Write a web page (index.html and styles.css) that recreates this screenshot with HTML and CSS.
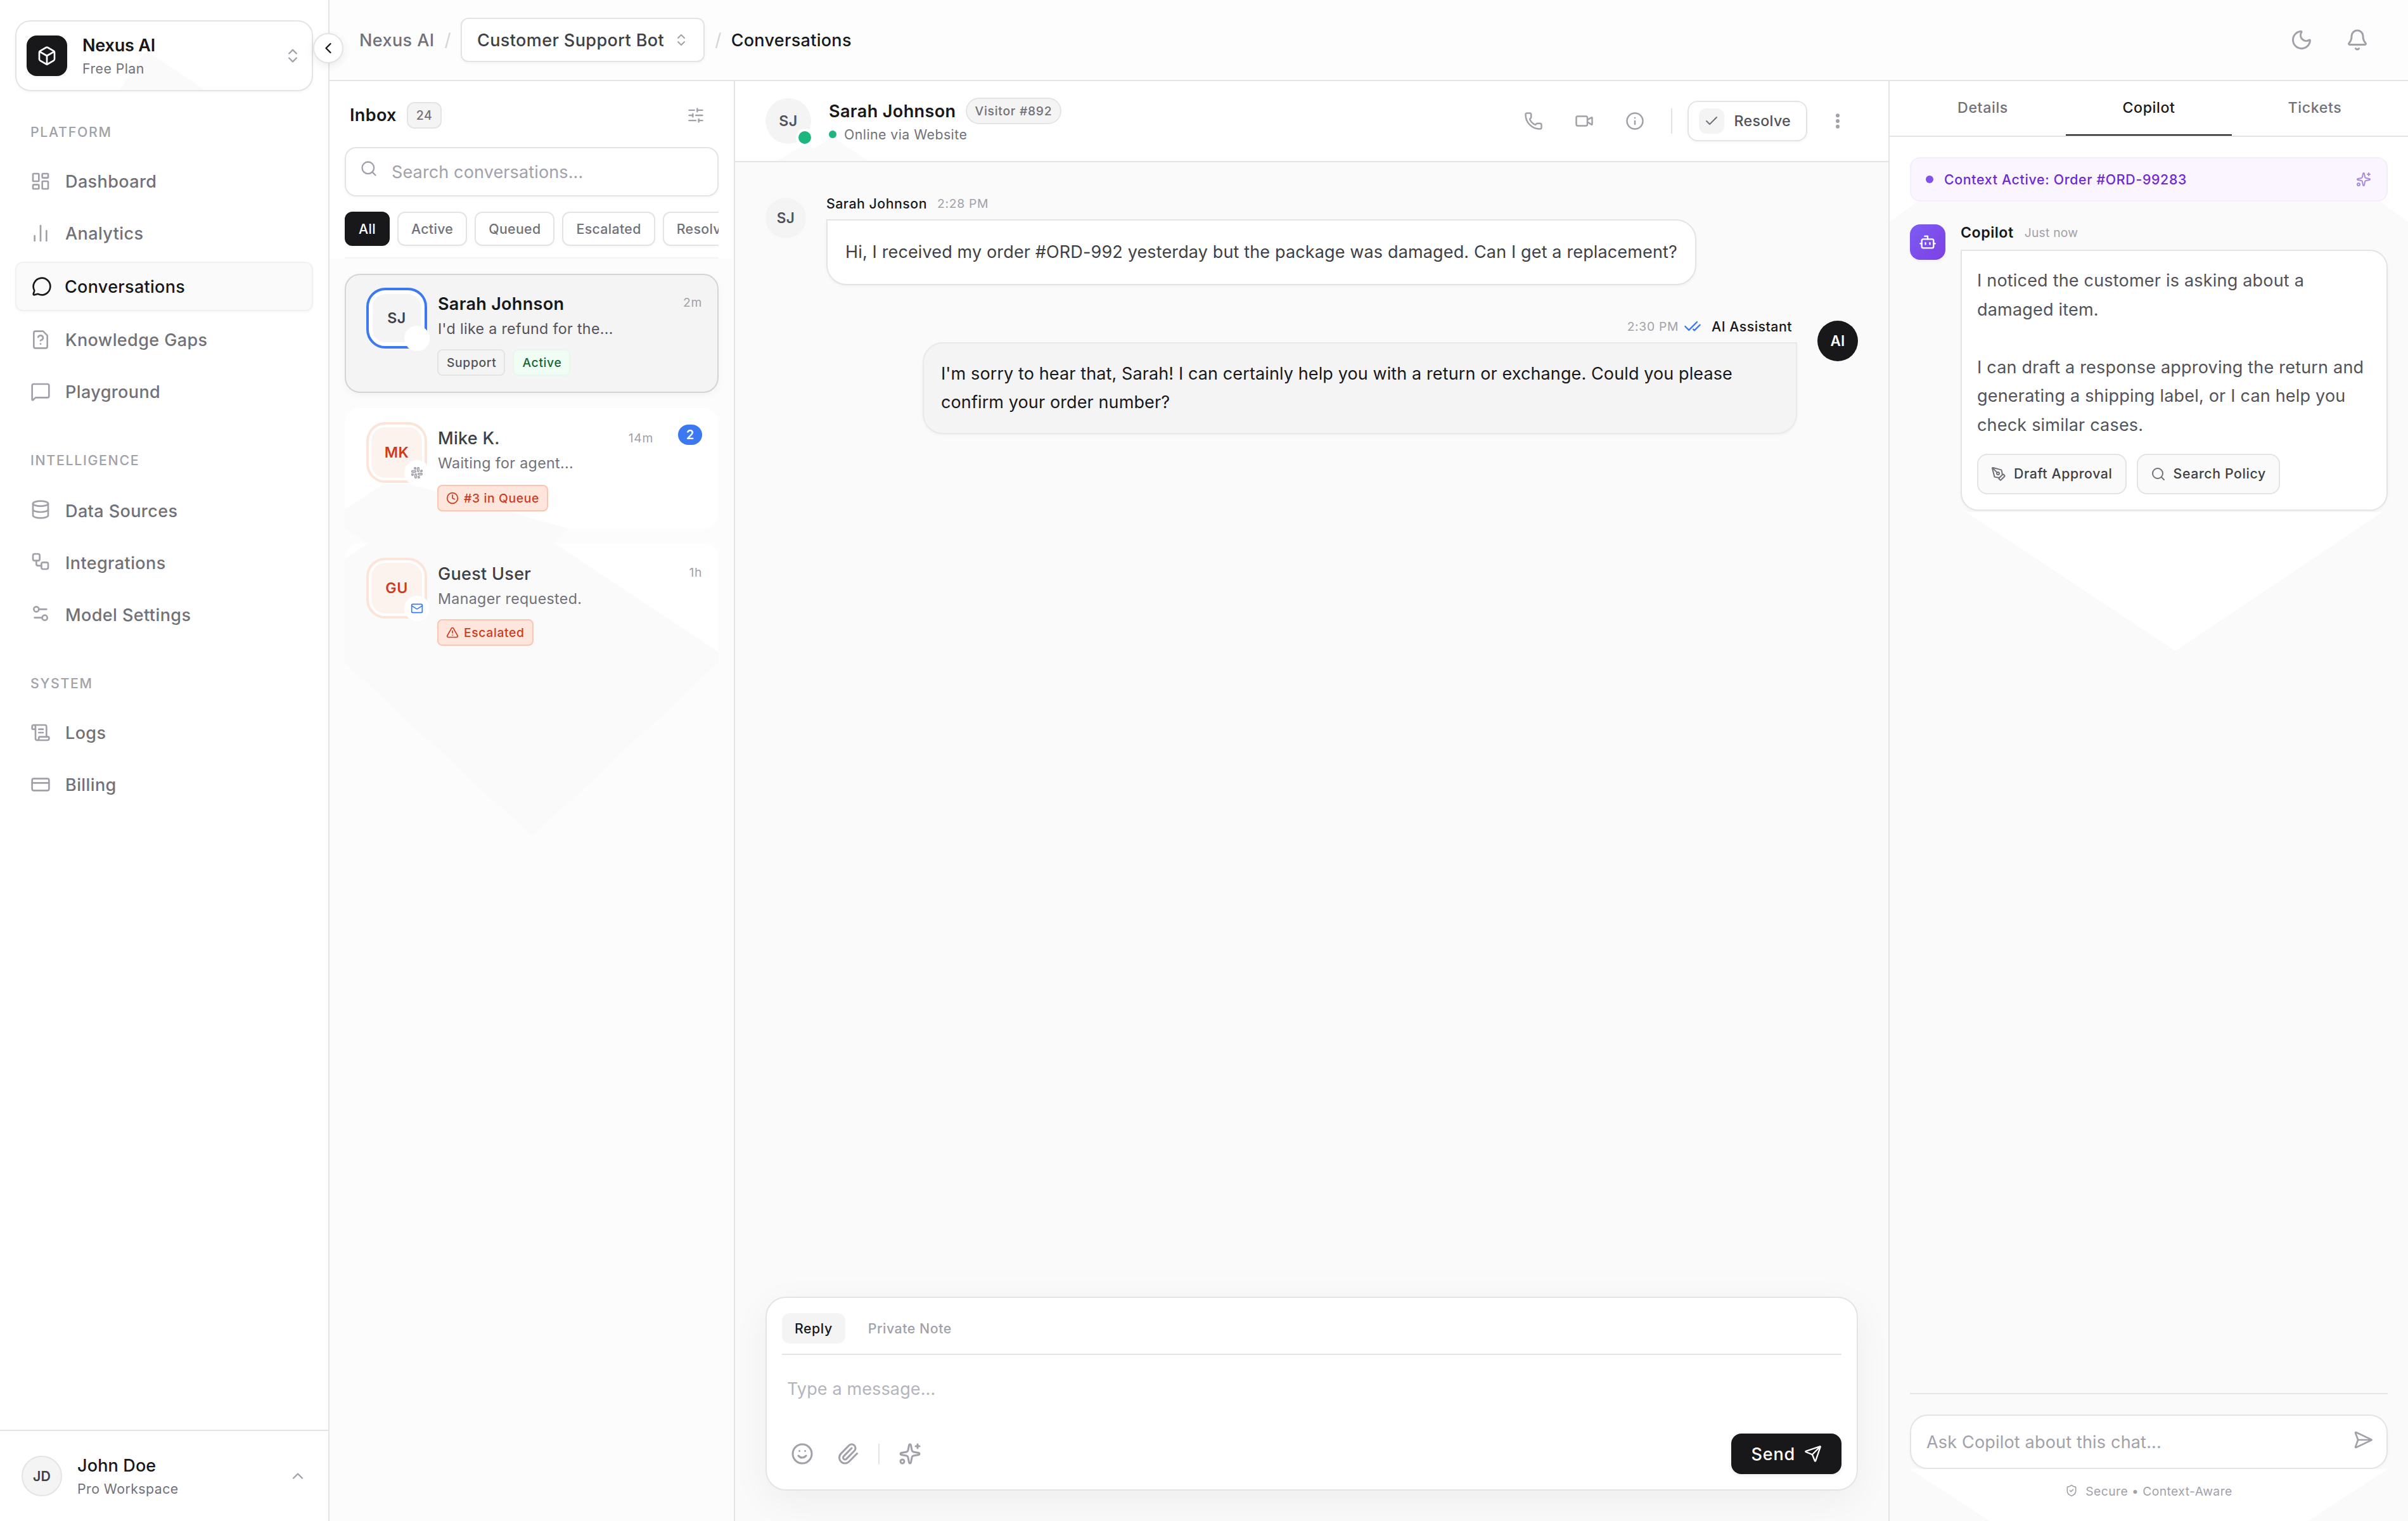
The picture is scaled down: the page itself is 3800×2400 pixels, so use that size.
FILE: index.html
```html
<!DOCTYPE html>
<html lang="en">
<head>
    <meta charset="UTF-8">
    <meta name="viewport" content="width=device-width, initial-scale=1.0">
    <title>Nexus AI - Conversations</title>
    <link rel="stylesheet" href="styles.css">
</head>
<body>
    <!-- Icon sprite -->
    <svg class="sprite">
        <symbol id="i-box" viewBox="0 0 24 24"><path d="M21 8a2 2 0 0 0-1-1.73l-7-4a2 2 0 0 0-2 0l-7 4A2 2 0 0 0 3 8v8a2 2 0 0 0 1 1.73l7 4a2 2 0 0 0 2 0l7-4A2 2 0 0 0 21 16Z"/><path d="m3.3 7 8.7 5 8.7-5"/><path d="M12 22V12"/></symbol>
        <symbol id="i-updown" viewBox="0 0 24 24"><path d="m7 15 5 5 5-5"/><path d="m7 9 5-5 5 5"/></symbol>
        <symbol id="i-left" viewBox="0 0 24 24"><path d="m15 18-6-6 6-6"/></symbol>
        <symbol id="i-up" viewBox="0 0 24 24"><path d="m18 15-6-6-6 6"/></symbol>
        <symbol id="i-dashboard" viewBox="0 0 24 24"><rect width="7" height="9" x="3" y="3" rx="1"/><rect width="7" height="5" x="14" y="3" rx="1"/><rect width="7" height="9" x="14" y="12" rx="1"/><rect width="7" height="5" x="3" y="16" rx="1"/></symbol>
        <symbol id="i-chart" viewBox="0 0 24 24"><path d="M5 21v-6"/><path d="M12 21V3"/><path d="M19 21V9"/></symbol>
        <symbol id="i-circle-msg" viewBox="0 0 24 24"><path d="M2.992 16.342a2 2 0 0 1 .094 1.167l-1.065 3.29a1 1 0 0 0 1.236 1.168l3.413-.998a2 2 0 0 1 1.099.092 10 10 0 1 0-4.777-4.719"/></symbol>
        <symbol id="i-file-q" viewBox="0 0 24 24"><path d="M12 17h.01"/><path d="M15 2H6a2 2 0 0 0-2 2v16a2 2 0 0 0 2 2h12a2 2 0 0 0 2-2V7z"/><path d="M9.1 9a3 3 0 0 1 5.82 1c0 2-3 3-3 3"/></symbol>
        <symbol id="i-square-msg" viewBox="0 0 24 24"><path d="M22 17a2 2 0 0 1-2 2H6.828a2 2 0 0 0-1.414.586l-2.202 2.202A.71.71 0 0 1 2 21.286V5a2 2 0 0 1 2-2h16a2 2 0 0 1 2 2z"/></symbol>
        <symbol id="i-database" viewBox="0 0 24 24"><ellipse cx="12" cy="5" rx="9" ry="3"/><path d="M3 5v14a9 3 0 0 0 18 0V5"/><path d="M3 12a9 3 0 0 0 18 0"/></symbol>
        <symbol id="i-workflow" viewBox="0 0 24 24"><rect width="8" height="8" x="3" y="3" rx="2"/><path d="M7 11v4a2 2 0 0 0 2 2h4"/><rect width="8" height="8" x="13" y="13" rx="2"/></symbol>
        <symbol id="i-settings" viewBox="0 0 24 24"><path d="M14 17H5"/><path d="M19 7h-9"/><circle cx="17" cy="17" r="3"/><circle cx="7" cy="7" r="3"/></symbol>
        <symbol id="i-scroll" viewBox="0 0 24 24"><path d="M15 12h-5"/><path d="M15 8h-5"/><path d="M19 17V5a2 2 0 0 0-2-2H4"/><path d="M8 21h12a2 2 0 0 0 2-2v-1a1 1 0 0 0-1-1H11a1 1 0 0 0-1 1v1a2 2 0 1 1-4 0V5a2 2 0 1 0-4 0v2a1 1 0 0 0 1 1h3"/></symbol>
        <symbol id="i-card" viewBox="0 0 24 24"><rect width="20" height="14" x="2" y="5" rx="2"/><path d="M2 10h20"/></symbol>
        <symbol id="i-moon" viewBox="0 0 24 24"><path d="M20.985 12.486a9 9 0 1 1-9.473-9.472c.405-.022.617.46.402.803a6 6 0 0 0 8.268 8.268c.344-.215.825-.004.803.401"/></symbol>
        <symbol id="i-bell" viewBox="0 0 24 24"><path d="M10.268 21a2 2 0 0 0 3.464 0"/><path d="M3.262 15.326A1 1 0 0 0 4 17h16a1 1 0 0 0 .74-1.673C19.41 13.956 18 12.499 18 8A6 6 0 0 0 6 8c0 4.499-1.411 5.956-2.738 7.326"/></symbol>
        <symbol id="i-sliders" viewBox="0 0 24 24"><path d="M10 5H3"/><path d="M12 19H3"/><path d="M14 3v4"/><path d="M16 17v4"/><path d="M21 12h-9"/><path d="M21 19h-5"/><path d="M21 5h-7"/><path d="M8 10v4"/><path d="M8 12H3"/></symbol>
        <symbol id="i-search" viewBox="0 0 24 24"><circle cx="11" cy="11" r="8"/><path d="m21 21-4.34-4.34"/></symbol>
        <symbol id="i-slack" viewBox="0 0 24 24"><rect width="3" height="8" x="13" y="2" rx="1.5"/><path d="M19 8.5V10h1.5A1.5 1.5 0 1 0 19 8.5"/><rect width="3" height="8" x="8" y="14" rx="1.5"/><path d="M5 15.5V14H3.5A1.5 1.5 0 1 0 5 15.5"/><rect width="8" height="3" x="14" y="13" rx="1.5"/><path d="M15.5 19H14v1.5a1.5 1.5 0 1 0 1.5-1.5"/><rect width="8" height="3" x="2" y="8" rx="1.5"/><path d="M8.5 5H10V3.5A1.5 1.5 0 1 0 8.5 5"/></symbol>
        <symbol id="i-mail" viewBox="0 0 24 24"><path d="m22 7-8.991 5.727a2 2 0 0 1-2.009 0L2 7"/><rect width="20" height="16" x="2" y="4" rx="2"/></symbol>
        <symbol id="i-clock" viewBox="0 0 24 24"><circle cx="12" cy="12" r="10"/><path d="M12 6v6l4 2"/></symbol>
        <symbol id="i-alert" viewBox="0 0 24 24"><path d="m21.73 18-8-14a2 2 0 0 0-3.48 0l-8 14A2 2 0 0 0 4 21h16a2 2 0 0 0 1.73-3"/><path d="M12 9v4"/><path d="M12 17h.01"/></symbol>
        <symbol id="i-phone" viewBox="0 0 24 24"><path d="M13.832 16.568a1 1 0 0 0 1.213-.303l.355-.465A2 2 0 0 1 17 15h3a2 2 0 0 1 2 2v3a2 2 0 0 1-2 2A18 18 0 0 1 2 4a2 2 0 0 1 2-2h3a2 2 0 0 1 2 2v3a2 2 0 0 1-.8 1.6l-.468.351a1 1 0 0 0-.292 1.233 14 14 0 0 0 6.392 6.384"/></symbol>
        <symbol id="i-video" viewBox="0 0 24 24"><path d="m16 13 5.223 3.482a.5.5 0 0 0 .777-.416V7.87a.5.5 0 0 0-.752-.432L16 10.5"/><rect x="2" y="6" width="14" height="12" rx="2"/></symbol>
        <symbol id="i-info" viewBox="0 0 24 24"><circle cx="12" cy="12" r="10"/><path d="M12 16v-4"/><path d="M12 8h.01"/></symbol>
        <symbol id="i-check" viewBox="0 0 24 24"><path d="M20 6 9 17l-5-5"/></symbol>
        <symbol id="i-more" viewBox="0 0 24 24"><circle cx="12" cy="5" r="1.4"/><circle cx="12" cy="12" r="1.4"/><circle cx="12" cy="19" r="1.4"/></symbol>
        <symbol id="i-checks" viewBox="0 0 24 24"><path d="M18 6 7 17l-5-5"/><path d="m22 10-7.5 7.5L13 16"/></symbol>
        <symbol id="i-smile" viewBox="0 0 24 24"><circle cx="12" cy="12" r="10"/><path d="M8 14s1.5 2 4 2 4-2 4-2"/><path d="M9 9h.01"/><path d="M15 9h.01"/></symbol>
        <symbol id="i-clip" viewBox="0 0 24 24"><path d="m16 6-8.414 8.586a2 2 0 0 0 2.829 2.829l8.414-8.586a4 4 0 1 0-5.657-5.657l-8.379 8.551a6 6 0 1 0 8.485 8.485l8.379-8.551"/></symbol>
        <symbol id="i-sparkles" viewBox="0 0 24 24"><path d="M11.017 2.814a1 1 0 0 1 1.966 0l1.051 5.558a2 2 0 0 0 1.594 1.594l5.558 1.051a1 1 0 0 1 0 1.966l-5.558 1.051a2 2 0 0 0-1.594 1.594l-1.051 5.558a1 1 0 0 1-1.966 0l-1.051-5.558a2 2 0 0 0-1.594-1.594l-5.558-1.051a1 1 0 0 1 0-1.966l5.558-1.051a2 2 0 0 0 1.594-1.594z"/><path d="M20 2v4"/><path d="M22 4h-4"/><circle cx="4" cy="20" r="2"/></symbol>
        <symbol id="i-send" viewBox="0 0 24 24"><path d="M14.536 21.686a.5.5 0 0 0 .937-.024l6.5-19a.496.496 0 0 0-.635-.635l-19 6.5a.5.5 0 0 0-.024.937l7.93 3.18a2 2 0 0 1 1.112 1.11z"/><path d="m21.854 2.147-10.94 10.939"/></symbol>
        <symbol id="i-send-h" viewBox="0 0 24 24"><path d="M3.714 3.048a.498.498 0 0 0-.683.627l2.843 7.627a2 2 0 0 1 0 1.396l-2.842 7.627a.498.498 0 0 0 .682.627l18-8.5a.5.5 0 0 0 0-.904z"/><path d="M6 12h16"/></symbol>
        <symbol id="i-bot" viewBox="0 0 24 24"><path d="M12 8V4H8"/><rect width="16" height="12" x="4" y="8" rx="2"/><path d="M2 14h2"/><path d="M20 14h2"/><path d="M15 13v2"/><path d="M9 13v2"/></symbol>
        <symbol id="i-pen" viewBox="0 0 24 24"><path d="M15.707 21.293a1 1 0 0 1-1.414 0l-1.586-1.586a1 1 0 0 1 0-1.414l5.586-5.586a1 1 0 0 1 1.414 0l1.586 1.586a1 1 0 0 1 0 1.414z"/><path d="m18 13-1.375-6.874a1 1 0 0 0-.746-.776L3.235 2.028a1 1 0 0 0-1.207 1.207L5.35 15.879a1 1 0 0 0 .776.746L13 18"/><path d="m2.3 2.3 7.286 7.286"/><circle cx="11" cy="11" r="2"/></symbol>
        <symbol id="i-shield" viewBox="0 0 24 24"><path d="M20 13c0 5-3.5 7.5-7.66 8.95a1 1 0 0 1-.67-.01C7.5 20.5 4 18 4 13V6a1 1 0 0 1 1-1c2 0 4.5-1.2 6.24-2.72a1.17 1.17 0 0 1 1.52 0C14.51 3.81 17 5 19 5a1 1 0 0 1 1 1z"/><path d="m9 12 2 2 4-4"/></symbol>
    </svg>

    <div class="app">
        <aside class="sidebar">
            <div class="workspace">
                <div class="workspace-logo"><svg class="icon icon-32"><use href="#i-box"/></svg></div>
                <div class="workspace-text">
                    <div class="workspace-name">Nexus AI</div>
                    <div class="workspace-plan">Free Plan</div>
                </div>
                <svg class="icon icon-28 muted"><use href="#i-updown"/></svg>
            </div>
            <button class="collapse"><svg class="icon icon-28"><use href="#i-left"/></svg></button>

            <nav class="nav">
                <div class="nav-group">
                    <div class="nav-label">PLATFORM</div>
                    <a class="nav-item"><svg class="icon icon-32"><use href="#i-dashboard"/></svg>Dashboard</a>
                    <a class="nav-item"><svg class="icon icon-32"><use href="#i-chart"/></svg>Analytics</a>
                    <a class="nav-item active"><svg class="icon icon-32"><use href="#i-circle-msg"/></svg>Conversations</a>
                    <a class="nav-item"><svg class="icon icon-32"><use href="#i-file-q"/></svg>Knowledge Gaps</a>
                    <a class="nav-item"><svg class="icon icon-32"><use href="#i-square-msg"/></svg>Playground</a>
                </div>
                <div class="nav-group intelligence">
                    <div class="nav-label">INTELLIGENCE</div>
                    <a class="nav-item"><svg class="icon icon-32"><use href="#i-database"/></svg>Data Sources</a>
                    <a class="nav-item"><svg class="icon icon-32"><use href="#i-workflow"/></svg>Integrations</a>
                    <a class="nav-item"><svg class="icon icon-32"><use href="#i-settings"/></svg>Model Settings</a>
                </div>
                <div class="nav-group">
                    <div class="nav-label">SYSTEM</div>
                    <a class="nav-item"><svg class="icon icon-32"><use href="#i-scroll"/></svg>Logs</a>
                    <a class="nav-item"><svg class="icon icon-32"><use href="#i-card"/></svg>Billing</a>
                </div>
            </nav>

            <div class="user">
                <div class="user-avatar">JD</div>
                <div class="user-text">
                    <div class="user-name">John Doe</div>
                    <div class="user-plan">Pro Workspace</div>
                </div>
                <svg class="icon icon-28 muted"><use href="#i-up"/></svg>
            </div>
        </aside>

        <div class="main">
            <header class="topbar">
                <span class="crumb">Nexus AI</span>
                <span class="slash">/</span>
                <button class="crumb-select">Customer Support Bot<svg class="icon icon-24 muted"><use href="#i-updown"/></svg></button>
                <span class="slash">/</span>
                <span class="crumb current">Conversations</span>
                <div class="topbar-actions">
                    <svg class="icon icon-36"><use href="#i-moon"/></svg>
                    <svg class="icon icon-36"><use href="#i-bell"/></svg>
                </div>
            </header>

            <div class="columns">
                <section class="inbox">
                    <div class="inbox-head">
                        <div class="inbox-title">
                            <h2>Inbox</h2>
                            <span class="count">24</span>
                            <svg class="icon icon-28 muted"><use href="#i-sliders"/></svg>
                        </div>
                        <div class="search">
                            <svg class="icon icon-28 muted"><use href="#i-search"/></svg>
                            <input type="text" placeholder="Search conversations...">
                        </div>
                        <div class="chips">
                            <button class="chip selected">All</button>
                            <button class="chip">Active</button>
                            <button class="chip">Queued</button>
                            <button class="chip">Escalated</button>
                            <button class="chip">Resolved</button>
                        </div>
                    </div>
                    <div class="list">
                        <div class="convo selected">
                            <div class="convo-avatar"><span>SJ</span><i class="channel"></i></div>
                            <div class="convo-body">
                                <div class="convo-top"><span class="convo-name">Sarah Johnson</span><span class="convo-time">2m</span></div>
                                <div class="convo-preview">I'd like a refund for the...</div>
                                <div class="tags"><span class="tag">Support</span><span class="tag green">Active</span></div>
                            </div>
                        </div>
                        <div class="convo waiting">
                            <div class="convo-avatar alert"><span>MK</span><i class="channel"><svg class="icon icon-20"><use href="#i-slack"/></svg></i></div>
                            <div class="convo-body">
                                <div class="convo-top"><span class="convo-name">Mike K.</span><span class="convo-time">14m</span><span class="unread">2</span></div>
                                <div class="convo-preview">Waiting for agent...</div>
                                <div class="tags"><span class="tag red"><svg class="icon icon-20"><use href="#i-clock"/></svg>#3 in Queue</span></div>
                            </div>
                        </div>
                        <div class="convo">
                            <div class="convo-avatar alert"><span>GU</span><i class="channel mail"><svg class="icon icon-20"><use href="#i-mail"/></svg></i></div>
                            <div class="convo-body">
                                <div class="convo-top"><span class="convo-name">Guest User</span><span class="convo-time">1h</span></div>
                                <div class="convo-preview">Manager requested.</div>
                                <div class="tags"><span class="tag red"><svg class="icon icon-20"><use href="#i-alert"/></svg>Escalated</span></div>
                            </div>
                        </div>
                    </div>
                </section>

                <section class="chat">
                    <div class="chat-head">
                        <div class="chat-avatar">SJ<i class="presence"></i></div>
                        <div class="chat-who">
                            <div class="chat-name">Sarah Johnson<span class="visitor">Visitor #892</span></div>
                            <div class="chat-status"><i class="dot"></i>Online via Website</div>
                        </div>
                        <div class="chat-actions">
                            <svg class="icon icon-30"><use href="#i-phone"/></svg>
                            <svg class="icon icon-30"><use href="#i-video"/></svg>
                            <svg class="icon icon-30"><use href="#i-info"/></svg>
                            <i class="divider"></i>
                            <button class="resolve"><span class="resolve-check"><svg class="icon icon-24"><use href="#i-check"/></svg></span>Resolve</button>
                            <svg class="icon icon-30 more"><use href="#i-more"/></svg>
                        </div>
                    </div>

                    <div class="messages">
                        <div class="message">
                            <div class="msg-avatar">SJ</div>
                            <div class="msg-body">
                                <div class="msg-meta"><b>Sarah Johnson</b><span class="time">2:28 PM</span></div>
                                <div class="bubble">Hi, I received my order #ORD-992 yesterday but the package was damaged. Can I get a replacement?</div>
                            </div>
                        </div>
                        <div class="message outgoing">
                            <div class="msg-body">
                                <div class="msg-meta"><span class="time">2:30 PM<svg class="icon icon-28"><use href="#i-checks"/></svg></span><b>AI Assistant</b></div>
                                <div class="bubble">I'm sorry to hear that, Sarah! I can certainly help you with a return or exchange. Could you please<br>confirm your order number?</div>
                            </div>
                            <div class="msg-avatar ai">AI</div>
                        </div>
                    </div>

                    <div class="composer">
                        <div class="composer-tabs">
                            <button class="composer-tab selected">Reply</button>
                            <button class="composer-tab">Private Note</button>
                        </div>
                        <textarea placeholder="Type a message..."></textarea>
                        <div class="composer-tools">
                            <svg class="icon icon-36"><use href="#i-smile"/></svg>
                            <svg class="icon icon-36"><use href="#i-clip"/></svg>
                            <i class="divider"></i>
                            <svg class="icon icon-36"><use href="#i-sparkles"/></svg>
                            <button class="send">Send<svg class="icon icon-28"><use href="#i-send"/></svg></button>
                        </div>
                    </div>
                </section>

                <aside class="copilot">
                    <div class="tabs">
                        <button class="tab">Details</button>
                        <button class="tab selected">Copilot</button>
                        <button class="tab">Tickets</button>
                    </div>
                    <div class="copilot-body">
                        <div class="context"><i class="dot"></i>Context Active: Order #ORD-99283<svg class="icon icon-24"><use href="#i-sparkles"/></svg></div>
                        <div class="copilot-msg">
                            <div class="bot"><svg class="icon icon-28"><use href="#i-bot"/></svg></div>
                            <div class="copilot-content">
                                <div class="copilot-meta"><b>Copilot</b><span>Just now</span></div>
                                <div class="copilot-bubble">
                                    <p>I noticed the customer is asking about a<br>damaged item.</p>
                                    <p>I can draft a response approving the return and<br>generating a shipping label, or I can help you<br>check similar cases.</p>
                                    <div class="suggestions">
                                        <button class="suggestion"><svg class="icon icon-24"><use href="#i-pen"/></svg>Draft Approval</button>
                                        <button class="suggestion"><svg class="icon icon-24"><use href="#i-search"/></svg>Search Policy</button>
                                    </div>
                                </div>
                            </div>
                        </div>
                    </div>
                    <div class="ask">
                        <div class="ask-box">
                            <input type="text" placeholder="Ask Copilot about this chat...">
                            <svg class="icon icon-32 muted"><use href="#i-send-h"/></svg>
                        </div>
                        <div class="secure"><svg class="icon icon-20"><use href="#i-shield"/></svg>Secure • Context-Aware</div>
                    </div>
                </aside>
            </div>
        </div>
    </div>
</body>
</html>
```
FILE: styles.css
```css
* {
    margin: 0;
    padding: 0;
    box-sizing: border-box;
}

body {
    font-family: Inter, 'Liberation Sans', sans-serif;
    font-size: 27px;
    letter-spacing: 0.13px;
    color: #18181b;
    background: #fff;
}

button, input, textarea {
    font: inherit;
    letter-spacing: inherit;
    color: inherit;
    background: none;
    border: none;
    outline: none;
    resize: none;
}

input::placeholder {
    color: #a1a1aa;
    opacity: 1;
}

.sprite {
    display: none;
}

/* Icons */
.icon {
    flex-shrink: 0;
    fill: none;
    stroke: currentColor;
    stroke-width: 2;
    stroke-linecap: round;
    stroke-linejoin: round;
}

.icon-20 { width: 20px; height: 20px; }
.icon-24 { width: 24px; height: 24px; }
.icon-28 { width: 28px; height: 28px; }
.icon-30 { width: 30px; height: 30px; }
.icon-32 { width: 32px; height: 32px; }
.icon-36 { width: 36px; height: 36px; }

.muted {
    color: #a1a1aa;
}

.app {
    display: flex;
    height: 100vh;
    overflow: hidden;
}

/* Sidebar */
.sidebar {
    position: relative;
    z-index: 2;
    width: 520px;
    flex-shrink: 0;
    display: flex;
    flex-direction: column;
    padding-top: 32px;
    background: #fff;
    border-right: 2px solid #e4e4e7;
}

.workspace {
    position: relative;
    display: flex;
    align-items: center;
    height: 112px;
    margin: 0 24px;
    padding: 0 16px;
    border: 2px solid #e4e4e7;
    border-radius: 24px;
    box-shadow: 0 2px 4px rgba(0, 0, 0, 0.04);
}

.workspace::before {
    content: '';
    position: absolute;
    left: 163px;
    bottom: 0;
    width: 134px;
    height: 58px;
    background: #fafafa;
    clip-path: polygon(28% 0, 36% 0, 100% 100%, 0 100%);
}

.workspace-logo {
    display: flex;
    align-items: center;
    justify-content: center;
    width: 64px;
    height: 64px;
    margin-right: 24px;
    border-radius: 16px;
    background: #18181b;
    color: #fff;
    box-shadow: 0 2px 4px rgba(0, 0, 0, 0.05);
}

.workspace-text {
    position: relative;
    flex: 1;
}

.workspace-name {
    line-height: 40px;
    font-weight: 600;
    letter-spacing: -0.2px;
}

.workspace-plan, .user-plan {
    font-size: 21.3px;
    line-height: 32px;
    letter-spacing: 0.45px;
    color: #71717a;
}

.collapse {
    position: absolute;
    top: 52px;
    right: -24px;
    display: flex;
    align-items: center;
    justify-content: center;
    width: 48px;
    height: 48px;
    border: 2px solid #e4e4e7;
    border-radius: 50%;
    background: #fff;
    box-shadow: 0 4px 14px rgba(0, 0, 0, 0.08);
}

.nav {
    flex: 1;
    padding: 48px 24px 0;
}

.nav-group {
    display: flex;
    flex-direction: column;
    gap: 6px;
    margin-bottom: 54px;
}

.nav-label {
    padding-left: 24px;
    margin-bottom: 18px;
    font-size: 21.3px;
    line-height: 32px;
    font-weight: 500;
    letter-spacing: 1.7px;
    color: #a1a1aa;
}

.nav-item {
    display: flex;
    align-items: center;
    gap: 23px;
    height: 76px;
    padding-left: 24px;
    font-weight: 500;
    letter-spacing: 0.4px;
    color: #71717a;
}

.nav-item .icon {
    color: #a1a1aa;
}

.nav-item.active {
    gap: 20px;
    height: 78px;
    margin: 1px 0;
    border: 2px solid #f1f1f4;
    border-radius: 12px;
    background: #fafafa;
    box-shadow: 0 2px 4px rgba(0, 0, 0, 0.03);
    color: #18181b;
    letter-spacing: 0.3px;
}

.nav-item.active .icon {
    color: #18181b;
}

.intelligence .nav-label {
    margin-bottom: 20px;
}

.intelligence .icon {
    margin-bottom: 4px;
}

.user {
    display: flex;
    align-items: center;
    height: 144px;
    padding: 0 34px;
    border-top: 2px solid #e4e4e7;
}

.user-avatar {
    width: 64px;
    height: 64px;
    margin-right: 24px;
    border: 2px solid #e4e4e7;
    border-radius: 50%;
    background: #f4f4f5;
    font-size: 21.3px;
    line-height: 60px;
    font-weight: 600;
    text-align: center;
    color: #3f3f46;
}

.user-text {
    flex: 1;
}

.user-name {
    line-height: 40px;
    font-weight: 500;
    letter-spacing: 0.15px;
}

/* Top bar */
.main {
    flex: 1;
    min-width: 0;
    display: flex;
    flex-direction: column;
}

.topbar {
    display: flex;
    align-items: center;
    height: 128px;
    padding: 0 62px 0 47px;
    background: #fdfdfd;
    border-bottom: 2px solid #e4e4e7;
    font-weight: 500;
    letter-spacing: 0.4px;
    flex-shrink: 0;
}

.crumb {
    color: #71717a;
}

.crumb.current {
    color: #18181b;
    letter-spacing: 0.3px;
}

.slash {
    margin: 0 15px 0 16px;
    font-size: 28px;
    font-weight: 400;
    color: #d4d4d8;
}

.crumb-select {
    display: flex;
    align-items: center;
    gap: 15px;
    height: 70px;
    padding: 0 23px 0 24px;
    border: 2px solid #e4e4e7;
    border-radius: 12px;
    background: #fff;
    box-shadow: 0 2px 4px rgba(0, 0, 0, 0.04);
    font-weight: 500;
    color: #3f3f46;
}

.topbar-actions {
    display: flex;
    gap: 52px;
    margin-left: auto;
    color: #a1a1aa;
}

.columns {
    flex: 1;
    display: flex;
    min-height: 0;
}

/* Inbox */
.inbox {
    width: 640px;
    flex-shrink: 0;
    border-right: 2px solid #e4e4e7;
    background: #fcfcfc;
}

.inbox-head {
    height: 280px;
    padding: 0 24px;
    background: #fff;
}

.inbox-title {
    display: flex;
    align-items: center;
    height: 104px;
    padding: 3px 22px 0 8px;
}

.inbox-title h2 {
    font-size: 27px;
    font-weight: 600;
    letter-spacing: 0.35px;
}

.inbox-title .icon {
    margin-left: auto;
}

.count {
    height: 42px;
    margin-left: 16px;
    padding: 0 13px;
    border: 2px solid #e4e4e7;
    border-radius: 12px;
    background: #f4f4f5;
    font-size: 19.5px;
    line-height: 38px;
    font-weight: 500;
    letter-spacing: 0.4px;
    color: #71717a;
}

.search {
    display: flex;
    align-items: center;
    height: 78px;
    padding: 0 22px;
    border: 2px solid #e4e4e7;
    border-radius: 18px;
    box-shadow: 0 2px 4px rgba(0, 0, 0, 0.04);
}

.search .icon {
    margin: 0 22px 10px 0;
}

.search input {
    flex: 1;
}

.chips {
    display: flex;
    gap: 12px;
    height: 98px;
    padding-top: 24px;
    overflow: hidden;
    border-bottom: 2px solid #f4f4f5;
}

.chip {
    flex-shrink: 0;
    height: 54px;
    padding: 0 20px;
    border: 2px solid #e4e4e7;
    border-radius: 12px;
    background: #fff;
    box-shadow: 0 2px 4px rgba(0, 0, 0, 0.03);
    font-size: 21.3px;
    line-height: 48px;
    font-weight: 500;
    letter-spacing: 0.35px;
    color: #71717a;
}

.chip.selected {
    border-color: #18181b;
    background: #18181b;
    color: #fff;
}

.list {
    position: relative;
    display: flex;
    flex-direction: column;
    gap: 24px;
    padding: 24px;
}

/* faint tinted polygon behind the lower conversations */
.list::after {
    content: '';
    position: absolute;
    left: 24px;
    top: 356px;
    width: 590px;
    height: 556px;
    background: #fafafa;
    clip-path: polygon(0 40px, 61px 0, 102px 0, 353px 70px, 331px 93px, 590px 265px, 590px 282px, 296px 556px, 0 282px, 0 118px, 37px 93px, 0 70px);
}

.convo {
    display: flex;
    gap: 16px;
    height: 190px;
    padding: 20px 24px 0 32px;
    border: 2px solid transparent;
    border-radius: 24px;
    background: #fff;
}

.convo.selected {
    height: 188px;
    border-color: #d4d4d8;
    background: #f4f4f5;
    box-shadow: 0 4px 12px rgba(0, 0, 0, 0.04);
}

.convo-avatar {
    position: relative;
    z-index: 1;
    flex-shrink: 0;
    width: 96px;
    height: 96px;
    padding: 6px;
    border: 4px solid #3b78f2;
    border-radius: 30px;
    background: #fff;
    font-size: 23.2px;
    font-weight: 600;
    letter-spacing: 0.5px;
    text-align: center;
    color: #3f3f46;
}

.convo-avatar span {
    display: block;
    height: 76px;
    border-radius: 20px;
    background: #f4f4f5;
    line-height: 76px;
}

.convo-avatar.alert {
    padding: 4px;
    border-color: #fde4d9;
    color: #d13a1c;
}

.convo-avatar.alert span {
    height: 80px;
    border-radius: 22px;
    background: #fdf3ee;
    line-height: 80px;
}

.channel {
    position: absolute;
    right: -8px;
    bottom: -8px;
    display: flex;
    align-items: center;
    justify-content: center;
    width: 40px;
    height: 40px;
    border-radius: 50%;
    background: #fff;
    color: #a1a1aa;
}

.channel.mail {
    color: #3b78f2;
}

.convo-body {
    position: relative;
    z-index: 1;
    flex: 1;
    padding-top: 8px;
    padding-left: 1px;
}

.convo-top {
    display: flex;
    align-items: flex-start;
    height: 36px;
    line-height: 36px;
}

.convo-name {
    flex: 1;
    font-weight: 500;
    letter-spacing: 0.3px;
    color: #3f3f46;
}

.convo.selected .convo-name {
    font-weight: 600;
    color: #18181b;
}

.convo-time {
    font-size: 19.3px;
    line-height: 30px;
    letter-spacing: 0.65px;
    color: #a1a1aa;
}

.waiting .convo-time {
    line-height: 34px;
}

.unread {
    width: 38px;
    height: 32px;
    margin: -4px 0 0 39px;
    border-radius: 16px;
    background: #3b78f2;
    font-size: 20px;
    line-height: 32px;
    font-weight: 600;
    text-align: center;
    color: #fff;
}

.convo-preview {
    margin-top: 4px;
    font-size: 23.2px;
    line-height: 34px;
    letter-spacing: 0.35px;
    color: #71717a;
}

.convo.selected .convo-preview {
    color: #52525b;
}

.tags {
    display: flex;
    gap: 12px;
    margin: 15px 0 0 -1px;
}

.waiting .tags {
    margin-top: 17px;
}

.tag {
    display: flex;
    align-items: center;
    gap: 8px;
    height: 42px;
    padding: 0 12px 0 13px;
    border: 2px solid #e4e4e7;
    border-radius: 8px;
    font-size: 19.3px;
    font-weight: 500;
    letter-spacing: 0.65px;
    color: #52525b;
}

.tag.green {
    border-color: #e6f7ec;
    background: #f0fdf4;
    color: #166534;
}

.tag.red {
    padding: 0 12px;
    border-color: #fcc5b0;
    background: #fee6dc;
    color: #cf3a1d;
}

/* Chat */
.chat {
    position: relative;
    flex: 1;
    min-width: 0;
    display: flex;
    flex-direction: column;
    overflow: hidden;
    background: #fafafa;
}

.chat-head {
    position: relative;
    display: flex;
    align-items: center;
    height: 128px;
    padding: 0 65px 0 48px;
    background: #fff;
    border-bottom: 2px solid #e4e4e7;
}

.chat-head::before {
    content: '';
    position: absolute;
    left: 66px;
    bottom: 0;
    width: 144px;
    height: 38px;
    background: #fafafa;
    clip-path: polygon(0 100%, 30% 32%, 41% 47%, 61% 0, 100% 100%);
}

.chat-avatar {
    position: relative;
    width: 72px;
    height: 72px;
    margin-right: 28px;
    border-radius: 50%;
    background: #f4f4f5;
    font-size: 23.2px;
    line-height: 72px;
    font-weight: 600;
    letter-spacing: 0.5px;
    text-align: center;
    color: #52525b;
}

.presence {
    position: absolute;
    right: -4px;
    bottom: -4px;
    width: 28px;
    height: 28px;
    border: 4px solid #fff;
    border-radius: 50%;
    background: #1db67d;
}

.chat-who {
    position: relative;
}

.chat-name {
    display: flex;
    align-items: center;
    height: 42px;
    font-weight: 600;
    letter-spacing: 0.4px;
}

.visitor {
    height: 42px;
    margin-left: 15px;
    padding: 0 13px;
    border: 2px solid #e4e4e7;
    border-radius: 21px;
    background: #f4f4f5;
    font-size: 19.3px;
    line-height: 38px;
    font-weight: 500;
    letter-spacing: 0.75px;
    color: #71717a;
}

.dot {
    width: 12px;
    height: 12px;
    border-radius: 50%;
    background: #1db67d;
}

.chat-status {
    display: flex;
    align-items: center;
    gap: 12px;
    font-size: 21.3px;
    line-height: 32px;
    letter-spacing: 0.45px;
    color: #71717a;
}

.chat-actions {
    display: flex;
    align-items: center;
    margin-left: auto;
    color: #a1a1aa;
}

.chat-actions > .icon {
    margin-right: 50px;
}

.chat-actions > .icon:nth-child(3) {
    margin-right: 42px;
}

.chat-actions > .icon.more {
    margin: 0 0 0 33px;
    fill: currentColor;
}

.divider {
    width: 2px;
    height: 40px;
    background: #e4e4e7;
}

.chat-actions .divider {
    margin-right: 24px;
}

.resolve {
    display: flex;
    align-items: center;
    height: 64px;
    padding: 0 24px 0 16px;
    border: 2px solid #e4e4e7;
    border-radius: 16px;
    background: #fff;
    box-shadow: 0 2px 4px rgba(0, 0, 0, 0.04);
    font-size: 23.2px;
    font-weight: 500;
    letter-spacing: 0.3px;
    color: #52525b;
}

.resolve-check {
    display: flex;
    align-items: center;
    justify-content: center;
    width: 40px;
    height: 40px;
    margin-right: 16px;
    border-radius: 12px;
    background: #f4f4f5;
    color: #71717a;
}

.messages {
    flex: 1;
    padding: 48px 48px 0;
}

.message {
    display: flex;
    gap: 32px;
    margin-bottom: 48px;
}

.message.outgoing {
    justify-content: flex-end;
}

.msg-avatar {
    width: 64px;
    height: 64px;
    margin-top: 8px;
    border-radius: 50%;
    background: #f4f4f5;
    font-size: 22.5px;
    line-height: 64px;
    font-weight: 600;
    letter-spacing: 0.3px;
    text-align: center;
    color: #52525b;
}

.msg-avatar.ai {
    background: #18181b;
    color: #fff;
}

.msg-meta {
    display: flex;
    align-items: center;
    gap: 16px;
    height: 34px;
    margin-bottom: 8px;
    font-size: 21.3px;
    letter-spacing: 0.5px;
}

.msg-meta b {
    font-weight: 500;
}

.outgoing .msg-meta {
    justify-content: flex-end;
    padding-right: 8px;
}

.time {
    display: flex;
    align-items: center;
    gap: 8px;
    font-size: 19.3px;
    letter-spacing: 0.7px;
    color: #a1a1aa;
}

.time .icon {
    color: #3b78f2;
}

.bubble {
    padding: 27px 28px;
    border: 2px solid #e4e4e7;
    border-radius: 0 32px 32px 32px;
    background: #fff;
    box-shadow: 0 2px 4px rgba(0, 0, 0, 0.04);
    line-height: 45.5px;
    letter-spacing: 0.14px;
    color: #3f3f46;
}

.outgoing .bubble {
    width: 1380px;
    padding: 25px 26px 25px 27px;
    border-color: #e9e9eb;
    border-radius: 32px 0 32px 32px;
    background: #f4f4f5;
    letter-spacing: 0.11px;
    color: #18181b;
}

.composer {
    height: 306px;
    margin: 0 48px 48px;
    padding: 24px;
    display: flex;
    flex-direction: column;
    border: 2px solid #e4e4e7;
    border-radius: 32px;
    background: #fff;
    box-shadow: 0 16px 60px rgba(0, 0, 0, 0.05);
}

.composer-tabs {
    display: flex;
    gap: 16px;
    padding-bottom: 16px;
    border-bottom: 2px solid #e4e4e7;
}

.composer-tab {
    height: 48px;
    padding: 0 20px;
    border-radius: 12px;
    font-size: 21.3px;
    font-weight: 500;
    letter-spacing: 0.55px;
    color: #a1a1aa;
}

.composer-tab.selected {
    background: #f4f4f5;
    color: #18181b;
}

.composer textarea {
    flex: 1;
    padding: 32px 8px 0;
    line-height: 44px;
    overflow: hidden;
}

.composer textarea::placeholder {
    color: #b4b4bb;
}

.composer-tools {
    display: flex;
    align-items: center;
    height: 64px;
    padding-left: 14px;
    color: #a1a1aa;
}

.composer-tools > .icon:first-child {
    margin-right: 36px;
}

.composer-tools .divider {
    height: 32px;
    margin: 0 30px;
}

.send {
    display: flex;
    align-items: center;
    gap: 14px;
    height: 64px;
    margin-left: auto;
    padding: 0 31px 0 32px;
    border-radius: 16px;
    background: #18181b;
    box-shadow: 0 2px 6px rgba(0, 0, 0, 0.08);
    font-weight: 500;
    letter-spacing: 0.8px;
    color: #fff;
}

/* Copilot */
.copilot {
    width: 820px;
    flex-shrink: 0;
    display: flex;
    flex-direction: column;
    border-left: 2px solid #e4e4e7;
    background: #fafafa;
}

.tabs {
    display: flex;
    height: 88px;
    padding: 0 16px;
    border-bottom: 2px solid #e4e4e7;
    background: #fff;
}

.tab {
    flex: 1;
    border-bottom: 2px solid transparent;
    font-size: 23.2px;
    font-weight: 500;
    letter-spacing: 0.6px;
    color: #71717a;
}

.tab.selected {
    border-color: #18181b;
    color: #18181b;
}

.copilot-body {
    position: relative;
    flex: 1;
    padding: 32px;
}

.copilot-body::before {
    content: '';
    position: absolute;
    inset: 0 0 auto 0;
    height: 134px;
    background: #fff;
    clip-path: polygon(0 0, 100% 0, 100% 100%, 774px 102px, 44px 102px, 0 100%);
}

.context {
    position: relative;
    display: flex;
    align-items: center;
    height: 70px;
    padding: 0 24px 0 23px;
    border: 2px solid #f4eefc;
    border-radius: 16px;
    background: #faf5ff;
    font-size: 21.3px;
    font-weight: 500;
    letter-spacing: 0.68px;
    color: #6d28d9;
}

.context .dot {
    margin-right: 17px;
    background: #8350ec;
}

.context .icon {
    margin-left: auto;
    color: #a78bdc;
}

.copilot-msg {
    display: flex;
    gap: 24px;
    margin-top: 32px;
}

.bot {
    display: flex;
    align-items: center;
    justify-content: center;
    width: 56px;
    height: 56px;
    margin-top: 4px;
    border-radius: 16px;
    background: linear-gradient(135deg, #7c5cf3, #7e3fe4);
    box-shadow: 0 2px 4px rgba(0, 0, 0, 0.06);
    color: #fff;
}

.copilot-content {
    flex: 1;
}

.copilot-meta {
    display: flex;
    align-items: center;
    gap: 17px;
    height: 34px;
    margin-bottom: 10px;
    font-size: 19.3px;
    letter-spacing: 0.25px;
    color: #a1a1aa;
}

.copilot-meta b {
    font-size: 23.2px;
    font-weight: 600;
    letter-spacing: 0.5px;
    color: #18181b;
}

.copilot-bubble {
    position: relative;
    height: 412px;
    padding: 24px;
    border: 2px solid #e4e4e7;
    border-radius: 0 28px 28px 28px;
    background: #fff;
    box-shadow: 0 2px 4px rgba(0, 0, 0, 0.04);
    line-height: 45.5px;
    letter-spacing: 0.2px;
    color: #52525b;
}

.copilot-bubble::after {
    content: '';
    position: absolute;
    left: 0;
    top: 412px;
    width: 100%;
    height: 219px;
    background: #fff;
    clip-path: polygon(1% 0, 99% 0, 50.3% 100%);
}

.copilot-bubble p {
    margin-bottom: 45.5px;
}

.copilot-bubble p + p {
    margin-bottom: 23px;
}

.suggestions {
    display: flex;
    gap: 16px;
}

.suggestion {
    display: flex;
    align-items: center;
    gap: 12px;
    height: 64px;
    padding: 0 20px;
    border: 2px solid #e4e4e7;
    border-radius: 16px;
    background: #fafafa;
    font-size: 21.3px;
    font-weight: 500;
    letter-spacing: 0.6px;
    color: #3f3f46;
}

.suggestion .icon {
    color: #71717a;
}

.ask {
    height: 202px;
    margin: 0 32px;
    padding-top: 32px;
    border-top: 2px solid #e4e4e7;
}

.ask-box {
    display: flex;
    align-items: center;
    height: 86px;
    padding: 0 21px 0 24px;
    border: 2px solid #e4e4e7;
    border-radius: 28px;
    background: #fff;
    box-shadow: 0 2px 4px rgba(0, 0, 0, 0.04);
    letter-spacing: 0.18px;
}

.ask-box input {
    flex: 1;
}

.ask-box .icon {
    margin-bottom: 6px;
}

.secure {
    display: flex;
    justify-content: center;
    gap: 12px;
    height: 82px;
    padding-top: 24px;
    background: #fff;
    clip-path: polygon(0 0, 100% 0, 628px 100%, 126px 100%);
    font-size: 19.3px;
    line-height: 22px;
    letter-spacing: 0.44px;
    color: #a1a1aa;
}
```
